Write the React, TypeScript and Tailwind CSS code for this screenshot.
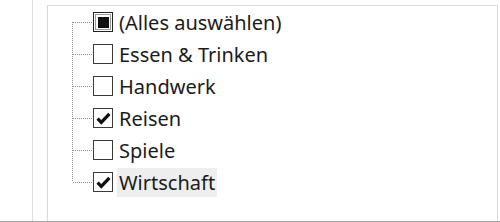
import { useState } from "react";

type Item = { label: string; state: "checked" | "unchecked" | "mixed" };

const items: Item[] = [
  { label: "(Alles auswählen)", state: "mixed" },
  { label: "Essen & Trinken", state: "unchecked" },
  { label: "Handwerk", state: "unchecked" },
  { label: "Reisen", state: "checked" },
  { label: "Spiele", state: "unchecked" },
  { label: "Wirtschaft", state: "checked" },
];

function Connector({ first, last }: { first: boolean; last: boolean }) {
  // dotted tree line drawn per row
  return (
    <svg width="21" height="32" className="shrink-0">
      <line x1="0.5" y1={first ? 16 : 0} x2="0.5" y2={last ? 16 : 32} stroke="#8c8c8c" strokeDasharray="1 1" />
      <line x1="1" y1="16.5" x2="21" y2="16.5" stroke="#8c8c8c" strokeDasharray="1 1" />
    </svg>
  );
}

function Box({ state, focused }: { state: Item["state"]; focused?: boolean }) {
  return (
    <div
      className={`w-[20px] h-[20px] shrink-0 bg-white flex items-center justify-center border ${
        focused ? "border-[#222] outline outline-1 outline-[#9a9a9a] -outline-offset-3" : "border-[#3a3a3a]"
      }`}
    >
      {state === "mixed" && <div className="w-[11px] h-[11px] bg-[#111]" />}
      {state === "checked" && (
        <svg width="15" height="13" viewBox="0 0 15 13">
          <path d="M1.6 6.6 L5.3 10.4 L13.4 1.8" fill="none" stroke="#111" strokeWidth="3.3" />
        </svg>
      )}
    </div>
  );
}

export default function App() {
  const [selected] = useState(5);
  return (
    <div className="w-[500px] h-[222px] bg-white overflow-hidden flex flex-col">
      <div className="flex-1 flex pl-[32px] border-b border-[#a8a8a8]">
        <div className="w-[15px] border-l border-[#dcdcdc]" />
        <div className="flex-1 mt-[5px] mr-[2px] border-l border-t border-r border-[#dadada] pl-[24px]">
          <div className="flex flex-col">
            {items.map((it, i) => (
              <div key={it.label} className="flex items-center h-[32px]">
                <Connector first={i === 0} last={i === items.length - 1} />
                <Box state={it.state} focused={i === 0} />
                <span
                  className={`ml-[4px] px-[2px] h-[29px] leading-[29px] text-[20px] text-[#1b1b1b] ${
                    i === selected ? "bg-[#eeeeee]" : ""
                  }`}
                  style={{ fontFamily: '"Noto Sans", "Open Sans", sans-serif' }}
                >
                  {it.label}
                </span>
              </div>
            ))}
          </div>
        </div>
      </div>
    </div>
  );
}
